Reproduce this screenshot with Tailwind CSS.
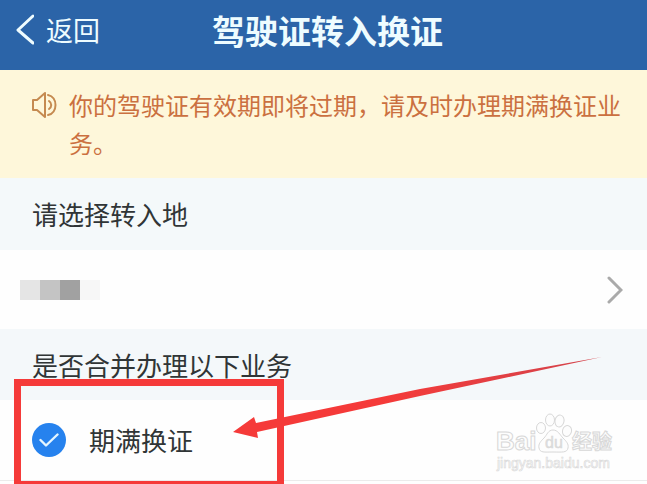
<!DOCTYPE html>
<html lang="zh-CN">
<head>
  <meta charset="UTF-8" />
  <title>驾驶证转入换证</title>
  <meta name="viewport" content="width=device-width, initial-scale=1.0" />
  <script src="https://cdn.jsdelivr.net/npm/@tailwindcss/browser@4"></script>
</head>
<body class="min-h-screen overflow-hidden bg-[#fefefe] font-['Noto_Sans_CJK_SC',sans-serif] text-[26px] text-[#303536]">
  <header class="grid grid-cols-[1fr_auto_1fr] items-center bg-[#2b64a8] pt-[5px] pr-2 pb-[15px] pl-4 text-[#eefcff]">
    <button type="button" class="flex items-center gap-3 justify-self-start text-[27px] leading-[50px]">
      <svg class="h-8 w-[18px]" viewBox="0 0 18 32" fill="none" stroke="currentColor" stroke-width="3" stroke-linecap="round" stroke-linejoin="round">
        <path d="M17 2 2 16l15 13" />
      </svg>
      返回
    </button>
    <h1 class="text-[33px] leading-[50px] font-bold">驾驶证转入换证</h1>
  </header>

  <div class="flex items-start gap-3 bg-[#fef7da] pt-4 pr-6 pb-4 pl-8 text-2xl text-[#cb7040]">
    <svg class="mt-[5px] h-7 w-[25px] shrink-0" viewBox="0 0 25 28" fill="none" stroke="#c58a50" stroke-width="2" stroke-linejoin="round" stroke-linecap="round">
      <path d="M1 9h4l8-7v24l-8-7H1z" />
      <path d="M17 10c3 2 3 6 0 8" />
      <path d="M16 4c10 2 10 18 0 20" />
    </svg>
    <p class="leading-[38px]">你的驾驶证有效期即将过期，请及时办理期满换证业务。</p>
  </div>

  <main>
    <h2 id="region" class="bg-[#f4f9fa] px-8 py-4 leading-10">请选择转入地</h2>
    <button type="button" aria-labelledby="region" class="flex w-full items-center justify-between pt-6 pr-6 pb-[23px] pl-5">
      <!-- masked region name -->
      <span class="flex">
        <span class="size-5 bg-[#e5e5e5]"></span>
        <span class="size-5 bg-[#c4c4c4]"></span>
        <span class="size-5 bg-[#a1a1a1]"></span>
        <span class="size-5 bg-[#f7f7f7]"></span>
      </span>
      <svg class="h-8 w-4" viewBox="0 0 16 32" fill="none" stroke="#aaaaaa" stroke-width="3" stroke-linecap="round">
        <path d="M2 4 14 16 2 28" />
      </svg>
    </button>

    <h2 class="bg-[#f4f8fa] px-8 pt-4 pb-[15px] leading-10">是否合并办理以下业务</h2>
    <div class="relative border-b border-[#ebebeb] pl-8">
      <label class="flex items-center gap-[23px] py-5 leading-10">
        <span class="grid size-[34px] place-items-center">
          <input type="checkbox" checked class="col-start-1 row-start-1 size-[34px] appearance-none rounded-full bg-[#2682ee]" />
          <svg class="pointer-events-none col-start-1 row-start-1 h-4 w-5" viewBox="0 0 20 16" fill="none" stroke="#e4f5ff" stroke-width="2.400" stroke-linecap="round" stroke-linejoin="round">
            <path d="M1.500 8 7 13.500 18.500 2.500" />
          </svg>
        </span>
        期满换证
      </label>

      <!-- highlight frame and arrow -->
      <div class="pointer-events-none absolute -top-[21px] left-[14px] h-[109px] w-[270px] border-[7px] border-[#f53a39]"></div>
      <svg class="pointer-events-none absolute -top-[46px] left-[232px] h-[84px] w-[370px]" viewBox="0 0 370 84">
        <defs>
          <linearGradient id="shaft" x1="0" x2="1" y1="0" y2="0">
            <stop offset="0.400" stop-color="#f53a39" />
            <stop offset="1" stop-color="#d2444c" />
          </linearGradient>
        </defs>
        <path fill="url(#shaft)" d="M1 78 22 63l2 6L188 35 370 3 188 42 25 78l1 6z" />
      </svg>

      <!-- watermark -->
      <svg class="pointer-events-none absolute top-3 right-[31px] h-[62px] w-[124px] font-['Liberation_Sans','Noto_Sans_CJK_SC',sans-serif]" viewBox="0 0 124 62" fill="#fdfdfd" stroke="#d8d8d8" stroke-width="1">
        <text x="4" y="38" font-size="26" font-weight="bold">Bai</text>
        <ellipse cx="49" cy="16" rx="4.500" ry="5.500" />
        <ellipse cx="58" cy="8" rx="4.500" ry="6" />
        <ellipse cx="67.500" cy="9" rx="4.500" ry="6" transform="rotate(12 67.500 9)" />
        <ellipse cx="75" cy="19" rx="4.500" ry="5.500" transform="rotate(15 75 19)" />
        <path d="M61 18c5 0 7 5 10 8s6 6 5 10c-1 5-6 4-15 4s-13 1-14-4c-1-4 2-7 5-10s4-8 9-8z" />
        <text x="53" y="36" font-size="16" fill="#dddddd" stroke-width="0.500">du</text>
        <text x="80" y="37" font-size="20" font-weight="bold">经验</text>
        <text x="5" y="56" font-size="14" stroke-width="0.600">jingyan.baidu.com</text>
      </svg>
    </div>
  </main>
</body>
</html>
